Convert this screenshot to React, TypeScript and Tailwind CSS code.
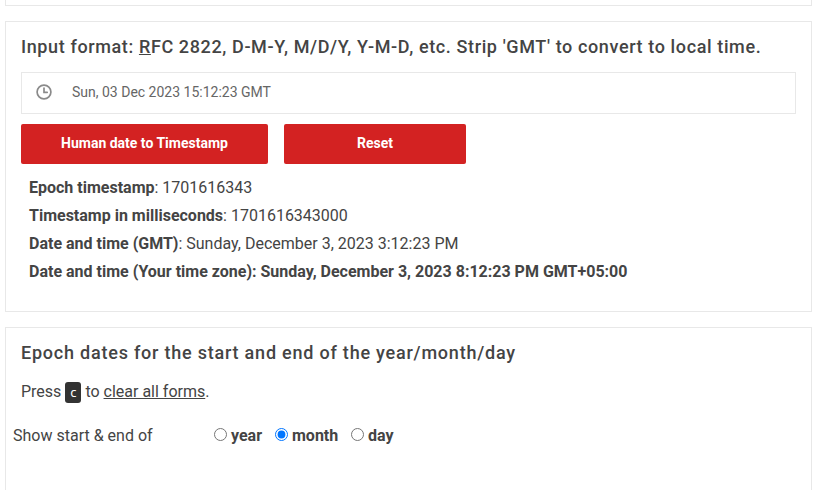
import React from "react";

function Clock() {
  return (
    <svg width="16" height="16" viewBox="0 0 16 16" fill="none" stroke="#8a8a8a" strokeWidth="1.7" strokeLinecap="round">
      <circle cx="8" cy="8" r="6.9" />
      <path d="M8 4V8.3H11.2" />
    </svg>
  );
}

function Row({ label, value, bold }: { label: string; value: string; bold?: boolean }) {
  return (
    <div className="h-7 leading-7">
      <b className="font-bold">{label}</b>
      {bold ? <b className="font-bold">{value}</b> : value}
    </div>
  );
}

function Radio({ label, checked, className }: { label: string; checked?: boolean; className: string }) {
  return (
    <label className={"flex items-center " + className}>
      <input type="radio" name="span" defaultChecked={checked} className="m-0 h-[13px] w-[13px] mr-[4px] -mt-[3px] accent-[#0075ff]" />
      <b className="font-bold">{label}</b>
    </label>
  );
}

export default function App() {
  return (
    <div className="h-[490px] w-[819px] overflow-hidden bg-white text-[16px] text-[#444] [font-family:Roboto,'Liberation_Sans',sans-serif]">
      <div className="ml-[5px] h-[6px] w-[807px] border-x border-b border-[#e8e8e8]" />
      <section className="ml-[5px] mt-[15px] h-[291px] w-[807px] border border-[#e8e8e8] px-[15px] pt-[12px]">
        <h2 className="text-[18px] leading-[26px] font-medium tracking-[0.62px] text-[#444]">
          Input format: <u>R</u>FC 2822, D-M-Y, M/D/Y, Y-M-D, etc. Strip 'GMT' to convert to local time.
        </h2>
        <div className="mt-[12px] flex h-[42px] w-[775px] items-center border border-[#e8e8e8] pl-[14px] text-[14px] text-[#666]">
          <span className="-mt-[2px]"><Clock /></span>
          <span className="ml-[20px] -mt-[1px]">Sun, 03 Dec 2023 15:12:23 GMT</span>
        </div>
        <div className="mt-[10px] flex gap-4">
          <button className="h-10 w-[247px] rounded-[2px] bg-[#d32222] pb-[2px] text-[14px] font-bold text-white">Human date to Timestamp</button>
          <button className="h-10 w-[182px] rounded-[2px] bg-[#d32222] pb-[2px] text-[14px] font-bold text-white">Reset</button>
        </div>
        <div className="ml-2 mt-[10px]">
          <Row label="Epoch timestamp" value=": 1701616343" />
          <Row label="Timestamp in milliseconds" value=": 1701616343000" />
          <Row label="Date and time (GMT)" value=": Sunday, December 3, 2023 3:12:23 PM" />
          <Row label="Date and time (Your time zone): " value="Sunday, December 3, 2023 8:12:23 PM GMT+05:00" bold />
        </div>
      </section>
      <section className="ml-[5px] mt-[15px] h-[200px] w-[807px] border border-[#e8e8e8] pt-[12px]">
        <h2 className="ml-[15px] text-[18px] leading-[26px] font-medium tracking-[0.78px] text-[#444]">Epoch dates for the start and end of the year/month/day</h2>
        <p className="ml-[15px] mt-[14px] flex h-6 items-center">
          Press
          <kbd className="ml-[4px] mr-[4px] flex h-[21px] w-4 items-center justify-center rounded-[3px] bg-[#333] pt-[2px] text-[13px] font-normal text-white [font-family:'Noto_Sans',sans-serif]">c</kbd>
          to&nbsp;<u>clear all forms</u>.
        </p>
        <div className="ml-[7px] mt-[20px] flex h-6 items-center">
          <span className="w-[201px]">Show start &amp; end of</span>
          <Radio label="year" className="w-[61px]" />
          <Radio label="month" checked className="w-[76px]" />
          <Radio label="day" className="" />
        </div>
      </section>
    </div>
  );
}
